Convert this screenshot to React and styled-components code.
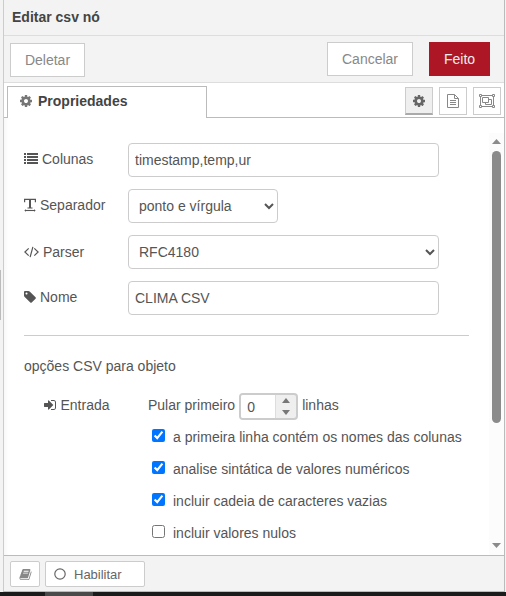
import React from "react";
import styled, { createGlobalStyle, css } from "styled-components";

const GlobalStyle = createGlobalStyle`
  *, *::before, *::after { box-sizing: border-box; }
  body {
    margin: 0;
    overflow: hidden;
    background: #f3f3f3;
    color: #555;
    font: 14px/20px "Liberation Sans", Arial, sans-serif;
  }
  input, select, button { font: inherit; color: inherit; margin: 0; }
`;

const Page = styled.div`
  display: flex;
  flex-direction: column;
  width: 506px;
  height: 596px;
`;

const Workspace = styled.div`
  display: flex;
  height: 592px;
`;

const Gutter = styled.div`
  width: 3px;
  padding-top: 270px;
`;

const GutterHandle = styled.div`
  width: 1px;
  height: 50px;
  background: #bbb;
`;

const Tray = styled.div`
  display: flex;
  flex-direction: column;
  width: 502px;
  border: solid #bbb;
  border-width: 0 1px 1px 1px;
  border-left-color: #ccc;
  background: #fff;
`;

const Header = styled.div`
  height: 36px;
  padding: 7px 8px;
  border-bottom: 1px solid #ddd;
  background: #f3f3f3;
  color: #444;
  font-weight: bold;
`;

const Toolbar = styled.div`
  display: flex;
  align-items: flex-start;
  height: 47px;
  padding: 6px 14px 0 6px;
  border-bottom: 1px solid #ddd;
  background: #f3f3f3;
`;

const Button = styled.button`
  height: 34px;
  width: ${(p) => p.$width}px;
  padding: 0;
  border: 1px solid #ccc;
  background: #fff;
  color: #888;
  ${(p) =>
    p.$primary &&
    css`
      margin-left: 16px;
      border-color: #ad1625;
      background: #ad1625;
      color: #eee;
    `}
  ${(p) =>
    p.$leading &&
    css`
      margin: 1px auto 0 0;
    `}
`;

const Tabs = styled.div`
  display: flex;
  flex: none;
  height: 35px;
  padding: 3px 3px 0;
  background: linear-gradient(#bbb, #bbb) bottom / 100% 1px no-repeat;
`;

const Tab = styled.div`
  display: flex;
  align-items: center;
  width: 200px;
  height: 32px;
  padding: 0 12px 4px;
  border: 1px solid #bbb;
  border-bottom: 0;
  background: #fff;
  color: #444;
  font-weight: bold;

  svg { margin-right: 6px; color: #777; }
`;

const TabButtons = styled.div`
  display: flex;
  gap: 6px;
  margin: 1px 0 0 auto;
`;

const TabButton = styled.button`
  display: flex;
  align-items: center;
  justify-content: center;
  width: 28px;
  height: 28px;
  padding: 0;
  border: 1px solid #ccc;
  background: #fff;
  color: #888;
  ${(p) =>
    p.$selected &&
    css`
      border-bottom: 2px solid #aaa;
      background: #efefef;
      color: #666;
    `}
`;

const Body = styled.div`
  display: flex;
  flex: 1;
  min-height: 0;
`;

const Form = styled.div`
  flex: 1;
  padding: 25px 20px 0;
  box-shadow: inset 6px 0 6px -5px rgba(0, 0, 0, 0.05);
`;

const Row = styled.div`
  display: flex;
  height: 34px;
  margin-bottom: 12px;
`;

const Label = styled.label`
  display: flex;
  align-items: center;
  height: 20px;
  width: ${(p) => p.$width || 104}px;
  margin-top: ${(p) => p.$top || 0}px;
  padding-left: ${(p) => p.$indent || 0}px;

  svg { margin-right: 4px; }
`;

const TextInput = styled.input`
  width: 311px;
  height: 34px;
  padding: 4px 6px;
  border: 1px solid #ccc;
  border-radius: 4px;
  background: #fff;
  outline: 0;
`;

const Select = styled.select`
  width: ${(p) => p.$width}px;
  height: 34px;
  padding: 4px 6px;
  border: 1px solid #ccc;
  border-radius: 4px;
  background: #fff;
`;

const Divider = styled.div`
  width: 445px;
  height: 1px;
  margin: 20px 0;
  background: #ccc;
`;

const EntryRow = styled.div`
  display: flex;
  height: 28px;
  margin-top: 17px;
`;

const Phrase = styled.span`
  margin-top: 2px;
`;

const Spinner = styled.div`
  display: flex;
  width: 59px;
  height: 27px;
  margin: 0 4px;
  border: 2px solid #ccc;
  border-radius: 4px;
  background: #efefef;
  overflow: hidden;
`;

const SpinnerValue = styled.input`
  width: 35px;
  height: 23px;
  padding: 1px 0 0 6px;
  border: 0;
  border-right: 1px solid #ddd;
  background: #fff;
  outline: 0;
`;

const SpinnerArrows = styled.div`
  display: flex;
  flex: 1;
  flex-direction: column;
  align-items: center;
  justify-content: space-between;
  padding: 3px 0;
  color: #777;
`;

const Options = styled.div`
  display: flex;
  flex-direction: column;
  gap: 12px;
  margin: 6px 0 0 128px;
`;

const Option = styled.label`
  display: flex;
  height: 20px;
`;

const Checkbox = styled.input`
  width: 13px;
  height: 13px;
  margin: 2px 8px 0 0;
`;

const Scrollbar = styled.div`
  display: flex;
  flex-direction: column;
  align-items: center;
  width: 15px;
  margin-top: 15px;
  padding: 6px 1px 7px 0;
  background: #fcfcfc;
  color: #8b8b8b;
`;

const Thumb = styled.div`
  width: 9px;
  height: 272px;
  margin: 7px 0 auto;
  border-radius: 5px;
  background: #8b8b8b;
`;

const Footer = styled.div`
  display: flex;
  flex: none;
  gap: 5px;
  height: 36px;
  padding: 5px 6px;
  border-top: 1px solid #bbb;
  background: #f3f3f3;
`;

const FooterButton = styled.button`
  display: flex;
  align-items: center;
  width: ${(p) => p.$width}px;
  height: 26px;
  padding: 0 8px;
  border: 1px solid #ccc;
  border-radius: 2px;
  background: #fff;
  color: ${(p) => (p.$icon ? "#888" : "#666")};
  font-size: 13px;

  svg { flex: none; }
  span { margin: 1px 0 0 8px; }
`;

const Taskbar = styled.div`
  height: 4px;
  padding-left: 45px;
  background: #1b1b1b;
`;

const TaskbarItem = styled.div`
  width: 48px;
  height: 4px;
  background: #4a4a4a;
`;

const Solid = ({ d, size = 14, x = 0, width = 1792 }) => (
  <svg width={(size * width) / 1792} height={size} viewBox={`${x} 0 ${width} 1792`} fill="currentColor">
    <path d={d} />
  </svg>
);

const cog =
  "M1152 896q0-106-75-181t-181-75-181 75-75 181 75 181 181 75 181-75 75-181zm512-109v222q0 12-8 23t-20 13l-185 28q-19 54-39 91 35 50 107 138 10 12 10 25t-9 23q-27 37-99 108t-94 71q-12 0-26-9l-138-108q-44 23-91 38-16 136-29 186-7 28-36 28h-222q-14 0-24.5-8.5t-11.5-21.5l-28-184q-49-16-90-37l-141 107q-10 9-25 9-14 0-25-11-126-114-165-168-7-10-7-23 0-12 8-23 15-21 51-66.5t54-70.5q-27-50-41-99l-183-27q-13-2-21-12.5t-8-23.5v-222q0-12 8-23t19-13l186-28q14-46 39-92-40-57-107-138-10-12-10-24 0-10 9-23 26-36 98.5-107.5t94.5-71.5q13 0 26 10l138 107q44-23 91-38 16-136 29-186 7-28 36-28h222q14 0 24.5 8.5t11.5 21.5l28 184q49 16 90 37l142-107q9-9 24-9 13 0 25 10 129 119 165 170 7 8 7 22 0 12-8 23-15 21-51 66.5t-54 70.5q26 50 41 98l183 28q13 2 21 12.5t8 23.5z";
const tag =
  "M576 448q0-53-37.5-90.5t-90.5-37.5-90.5 37.5-37.5 90.5 37.5 90.5 90.5 37.5 90.5-37.5 37.5-90.5zm1067 576q0 53-37 90l-491 492q-39 37-91 37-53 0-90-37l-715-716q-38-37-64.5-101t-26.5-117v-416q0-52 38-90t90-38h416q53 0 117 26.5t102 64.5l715 714q37 39 37 91z";
const signIn =
  "M1312 896q0 26-19 45l-544 544q-19 19-45 19t-45-19-19-45v-288h-448q-26 0-45-19t-19-45v-384q0-26 19-45t45-19h448v-288q0-26 19-45t45-19 45 19l544 544q19 19 19 45zm352-352v704q0 119-84.5 203.5t-203.5 84.5h-320q-13 0-22.5-9.5t-9.5-22.5q0-4-1-20t-.5-26.5 3-23.5 10-19.5 20.5-6.5h320q66 0 113-47t47-113v-704q0-66-47-113t-113-47h-312l-11.5-1-11.5-3-8-5.5-7-9-2-13.5q0-4-1-20t-.5-26.5 3-23.5 10-19.5 20.5-6.5h320q119 0 203.5 84.5t84.5 203.5z";
const book =
  "M1703 478q40 57 18 129l-275 906q-19 64-76.5 107.5t-122.5 43.5h-923q-77 0-148.5-53.5t-99.5-131.5q-24-67-2-127 0-4 3-27t4-37q1-8-3-21.5t-3-19.5q2-11 8-21t16.5-23.5 16.5-23.5q23-38 45-91.5t30-91.5q3-10 .5-30t-.5-28q3-11 17-28t17-23q21-36 42-92t25-90q1-9-2.5-32t.5-28q4-13 22-30.5t22-22.5q19-26 42.5-84.5t27.5-96.5q1-8-3-25.5t-2-26.5q2-8 9-18t18-23 17-21q8-12 16.5-30.5t15-35 16-36 19.5-32 26.5-23.5 36-11.5 47.5 5.5l-1 3q38-9 51-9h761q74 0 114 56t18 130l-274 906q-36 119-71.5 153.5t-128.5 34.5h-869q-27 0-38 15-11 16-1 43 24 70 144 70h923q29 0 56-15.5t35-41.5l300-987q7-22 5-57 38 15 59 43zm-1064 2q-4 13 2 22.5t20 9.5h608q13 0 25.5-9.5t16.5-22.5l21-64q4-13-2-22.5t-20-9.5h-608q-13 0-25.5 9.5t-16.5 22.5zm-83 256q-4 13 2 22.5t20 9.5h608q13 0 25.5-9.5t16.5-22.5l21-64q4-13-2-22.5t-20-9.5h-608q-13 0-25.5 9.5t-16.5 22.5z";

const CogIcon = () => <Solid d={cog} x={128} width={1536} />;
const TagIcon = () => <Solid d={tag} x={128} width={1536} />;
const SignInIcon = () => <Solid d={signIn} x={128} width={1600} />;
const BookIcon = () => <Solid d={book} size={13} />;

const ListIcon = () => (
  <svg width="14" height="12" viewBox="0 0 14 12" fill="currentColor">
    <path d="M0 0h2v2.1H0zM3 0h11v2.1H3zM0 3h2v2.1H0zM3 3h11v2.1H3zM0 6h2v2.1H0zM3 6h11v2.1H3zM0 9h2v2.1H0zM3 9h11v2.1H3z" />
  </svg>
);

const TextWidthIcon = () => (
  <svg width="12" height="14" viewBox="0 0 12 14" fill="none" stroke="currentColor">
    <path d="M.6 4.2V1.4h10.8v2.8M3.5 10h5" strokeWidth="1.2" />
    <path d="M6 1.5V10" strokeWidth="2" />
    <path d="M1 12.5h10" strokeWidth="1.1" />
    <path d="M2 11.3.3 12.5 2 13.7zM10 11.3l1.7 1.2-1.7 1.2z" fill="currentColor" stroke="none" />
  </svg>
);

const CodeIcon = () => (
  <svg width="15" height="14" viewBox="0 0 15 14" fill="none" stroke="currentColor" strokeWidth="1.2">
    <path d="M4.7 3.4.9 7l3.8 3.6M10.3 3.4 14.1 7l-3.8 3.6M8.9 1.8 6.1 12.2" />
  </svg>
);

const FileIcon = () => (
  <svg width="12" height="14" viewBox="0 0 12 14" fill="none" stroke="currentColor">
    <path d="M.5.5h7l4 4v9H.5zM7.5.5v4h4M3 6.5h6M3 8.5h6M3 10.5h6" />
  </svg>
);

const GroupIcon = () => (
  <svg width="16" height="14" viewBox="0 0 16 14" fill="none" stroke="currentColor">
    <path d="M2.5 1.5h11M2.5 12.5h11M1.5 2.5v9M14.5 2.5v9" />
    <path d="M.5.5h2v2h-2zM13.5.5h2v2h-2zM.5 11.5h2v2h-2zM13.5 11.5h2v2h-2z" />
    <path d="M3.5 3.5h6v5h-6zM9.5 5.5h3v5h-6v-2" />
  </svg>
);

const CircleIcon = () => (
  <svg width="12" height="12" viewBox="0 0 12 12" fill="none" stroke="currentColor" strokeWidth="1.2">
    <circle cx="6" cy="6" r="5.2" />
  </svg>
);

const Arrow = ({ down, width = 9, height = 5 }) => (
  <svg width={width} height={height} viewBox="0 0 10 5" preserveAspectRatio="none" fill="currentColor">
    <path d={down ? "M0 0h10L5 5z" : "M0 5h10L5 0z"} />
  </svg>
);

const options = [
  ["a primeira linha contém os nomes das colunas", true],
  ["analise sintática de valores numéricos", true],
  ["incluir cadeia de caracteres vazias", true],
  ["incluir valores nulos", false],
];

export default function App() {
  return (
    <Page>
      <GlobalStyle />
      <Workspace>
        <Gutter>
          <GutterHandle />
        </Gutter>
        <Tray>
          <Header>Editar csv nó</Header>
          <Toolbar>
            <Button $width={75} $leading>Deletar</Button>
            <Button $width={86}>Cancelar</Button>
            <Button $width={61} $primary>Feito</Button>
          </Toolbar>
          <Tabs>
            <Tab><CogIcon />Propriedades</Tab>
            <TabButtons>
              <TabButton $selected aria-label="Propriedades"><CogIcon /></TabButton>
              <TabButton aria-label="Descrição"><FileIcon /></TabButton>
              <TabButton aria-label="Aparência"><GroupIcon /></TabButton>
            </TabButtons>
          </Tabs>
          <Body>
            <Form>
              <Row>
                <Label $top={6}><ListIcon />Colunas</Label>
                <TextInput defaultValue="timestamp,temp,ur" />
              </Row>
              <Row>
                <Label $top={6}><TextWidthIcon />Separador</Label>
                <Select $width={150}><option>ponto e vírgula</option></Select>
              </Row>
              <Row>
                <Label $top={7}><CodeIcon />Parser</Label>
                <Select $width={311}><option>RFC4180</option></Select>
              </Row>
              <Row>
                <Label $top={6}><TagIcon />Nome</Label>
                <TextInput defaultValue="CLIMA CSV" />
              </Row>
              <Divider />
              <div>opções CSV para objeto</div>
              <EntryRow>
                <Label $top={2} $indent={20} $width={124}><SignInIcon />Entrada</Label>
                <Phrase>Pular primeiro</Phrase>
                <Spinner>
                  <SpinnerValue defaultValue="0" />
                  <SpinnerArrows><Arrow width={8} /><Arrow down width={8} /></SpinnerArrows>
                </Spinner>
                <Phrase>linhas</Phrase>
              </EntryRow>
              <Options>
                {options.map(([text, checked]) => (
                  <Option key={text}>
                    <Checkbox type="checkbox" defaultChecked={checked} />
                    {text}
                  </Option>
                ))}
              </Options>
            </Form>
            <Scrollbar>
              <Arrow />
              <Thumb />
              <Arrow down />
            </Scrollbar>
          </Body>
          <Footer>
            <FooterButton $width={30} $icon aria-label="Ajuda"><BookIcon /></FooterButton>
            <FooterButton $width={100}><CircleIcon /><span>Habilitar</span></FooterButton>
          </Footer>
        </Tray>
      </Workspace>
      <Taskbar>
        <TaskbarItem />
      </Taskbar>
    </Page>
  );
}
